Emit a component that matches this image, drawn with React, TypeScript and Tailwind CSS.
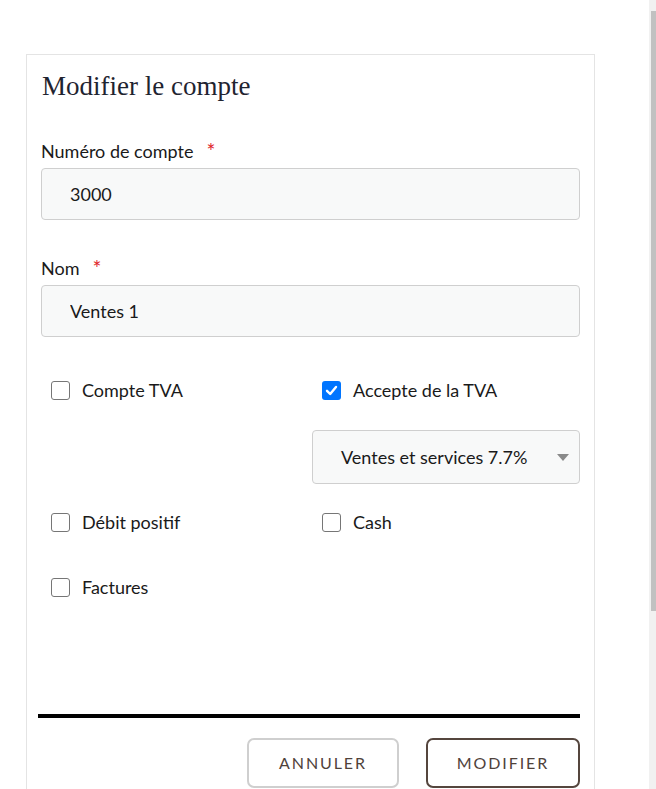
import React, { useState } from 'react';

const sans = "font-['Lato','Noto_Sans',sans-serif]";

const Check: React.FC<{ label: string; checked?: boolean; onToggle: () => void }> = ({
  label,
  checked,
  onToggle,
}) => (
  <label className="flex cursor-pointer items-center gap-3 pl-[10px]" onClick={onToggle}>
    {checked ? (
      <span className="flex h-[19px] w-[19px] items-center justify-center rounded-[3px] bg-[#0075ff]">
        <svg width="13" height="13" viewBox="0 0 13 13" fill="none">
          <path d="M2 6.8 5.2 10 11 3" stroke="#fff" strokeWidth="2.4" strokeLinecap="round" strokeLinejoin="round" />
        </svg>
      </span>
    ) : (
      <span className="h-[19px] w-[19px] rounded-[3px] border border-[#767676] bg-white" />
    )}
    <span className="text-[18px] text-[#1a1a1a]">{label}</span>
  </label>
);

export default function App() {
  const [checks, setChecks] = useState<Record<string, boolean>>({
    tva: false,
    accept: true,
    debit: false,
    cash: false,
    factures: false,
  });
  const toggle = (k: string) => setChecks({ ...checks, [k]: !checks[k] });

  return (
    <div className={`flex h-[789px] w-full overflow-hidden bg-white ${sans}`}>
      <div className="flex-1 pl-[26px] pt-[54px]">
        <div className="w-[569px] border border-b-0 border-[#e4e4e4] px-[14px] pb-10 pt-[14px]">
          {/* Title */}
          <h2 className="pl-[1px] font-['Liberation_Serif',serif] text-[27px] leading-[34px] text-[#1f2430]">
            Modifier le compte
          </h2>

          {/* Numéro */}
          <div className="mt-[37px]">
            <div className="flex items-center text-[18px] leading-[22px] text-[#1a1a1a]">
              Numéro de compte
              <span className="ml-[13px] text-[21px] text-[#e0262b]">*</span>
            </div>
            <input
              defaultValue="3000"
              className="mt-[6px] h-[52px] w-full rounded-[4px] border border-[#cfcfcf] bg-[#f8f9f9] px-[28px] text-[18px] text-[#1a1a1a] outline-none"
            />
          </div>

          {/* Nom */}
          <div className="mt-[37px]">
            <div className="flex items-center text-[18px] leading-[22px] text-[#1a1a1a]">
              Nom
              <span className="ml-[13px] text-[21px] text-[#e0262b]">*</span>
            </div>
            <input
              defaultValue="Ventes 1"
              className="mt-[6px] h-[52px] w-full rounded-[4px] border border-[#cfcfcf] bg-[#f8f9f9] px-[28px] text-[18px] text-[#1a1a1a] outline-none"
            />
          </div>

          {/* Options */}
          <div className="mt-[43px] grid grid-cols-[271px_1fr]">
            <div className="flex h-[20px] items-center">
              <Check label="Compte TVA" checked={checks.tva} onToggle={() => toggle('tva')} />
            </div>
            <div className="flex h-[20px] items-center">
              <Check label="Accepte de la TVA" checked={checks.accept} onToggle={() => toggle('accept')} />
            </div>
            <div />
            <div className="mt-[30px] flex h-[54px] items-center justify-between rounded-[4px] border border-[#cfcfcf] bg-[#f8f9f9] pl-[28px] pr-[10px]">
              <span className="text-[18px] text-[#1a1a1a]">Ventes et services 7.7%</span>
              <svg width="12" height="7" viewBox="0 0 12 7">
                <path d="M0 0h12L6 7z" fill="#8a8a8a" />
              </svg>
            </div>
            <div className="mt-[28px] flex h-[20px] items-center">
              <Check label="Débit positif" checked={checks.debit} onToggle={() => toggle('debit')} />
            </div>
            <div className="mt-[28px] flex h-[20px] items-center">
              <Check label="Cash" checked={checks.cash} onToggle={() => toggle('cash')} />
            </div>
            <div className="mt-[45px] flex h-[20px] items-center">
              <Check label="Factures" checked={checks.factures} onToggle={() => toggle('factures')} />
            </div>
          </div>

          {/* Footer */}
          <div className="-ml-[3px] mt-[117px] h-[4px] bg-black" />
          <div className="mt-[20px] flex justify-end gap-[27px]">
            <button className="h-[50px] w-[152px] rounded-[7px] border-2 border-[#cfcfcf] text-[16px] uppercase tracking-[0.12em] text-[#4f423b]">
              Annuler
            </button>
            <button className="h-[50px] w-[154px] rounded-[7px] border-2 border-[#55463e] text-[16px] uppercase tracking-[0.12em] text-[#4f423b]">
              Modifier
            </button>
          </div>
        </div>
      </div>
      {/* scrollbar */}
      <div className="flex w-[7px] flex-col bg-[#f1f1f1] pl-[2px] pt-[11px]">
        <div className="h-[600px] bg-[#c1c1c1]" />
      </div>
    </div>
  );
}
